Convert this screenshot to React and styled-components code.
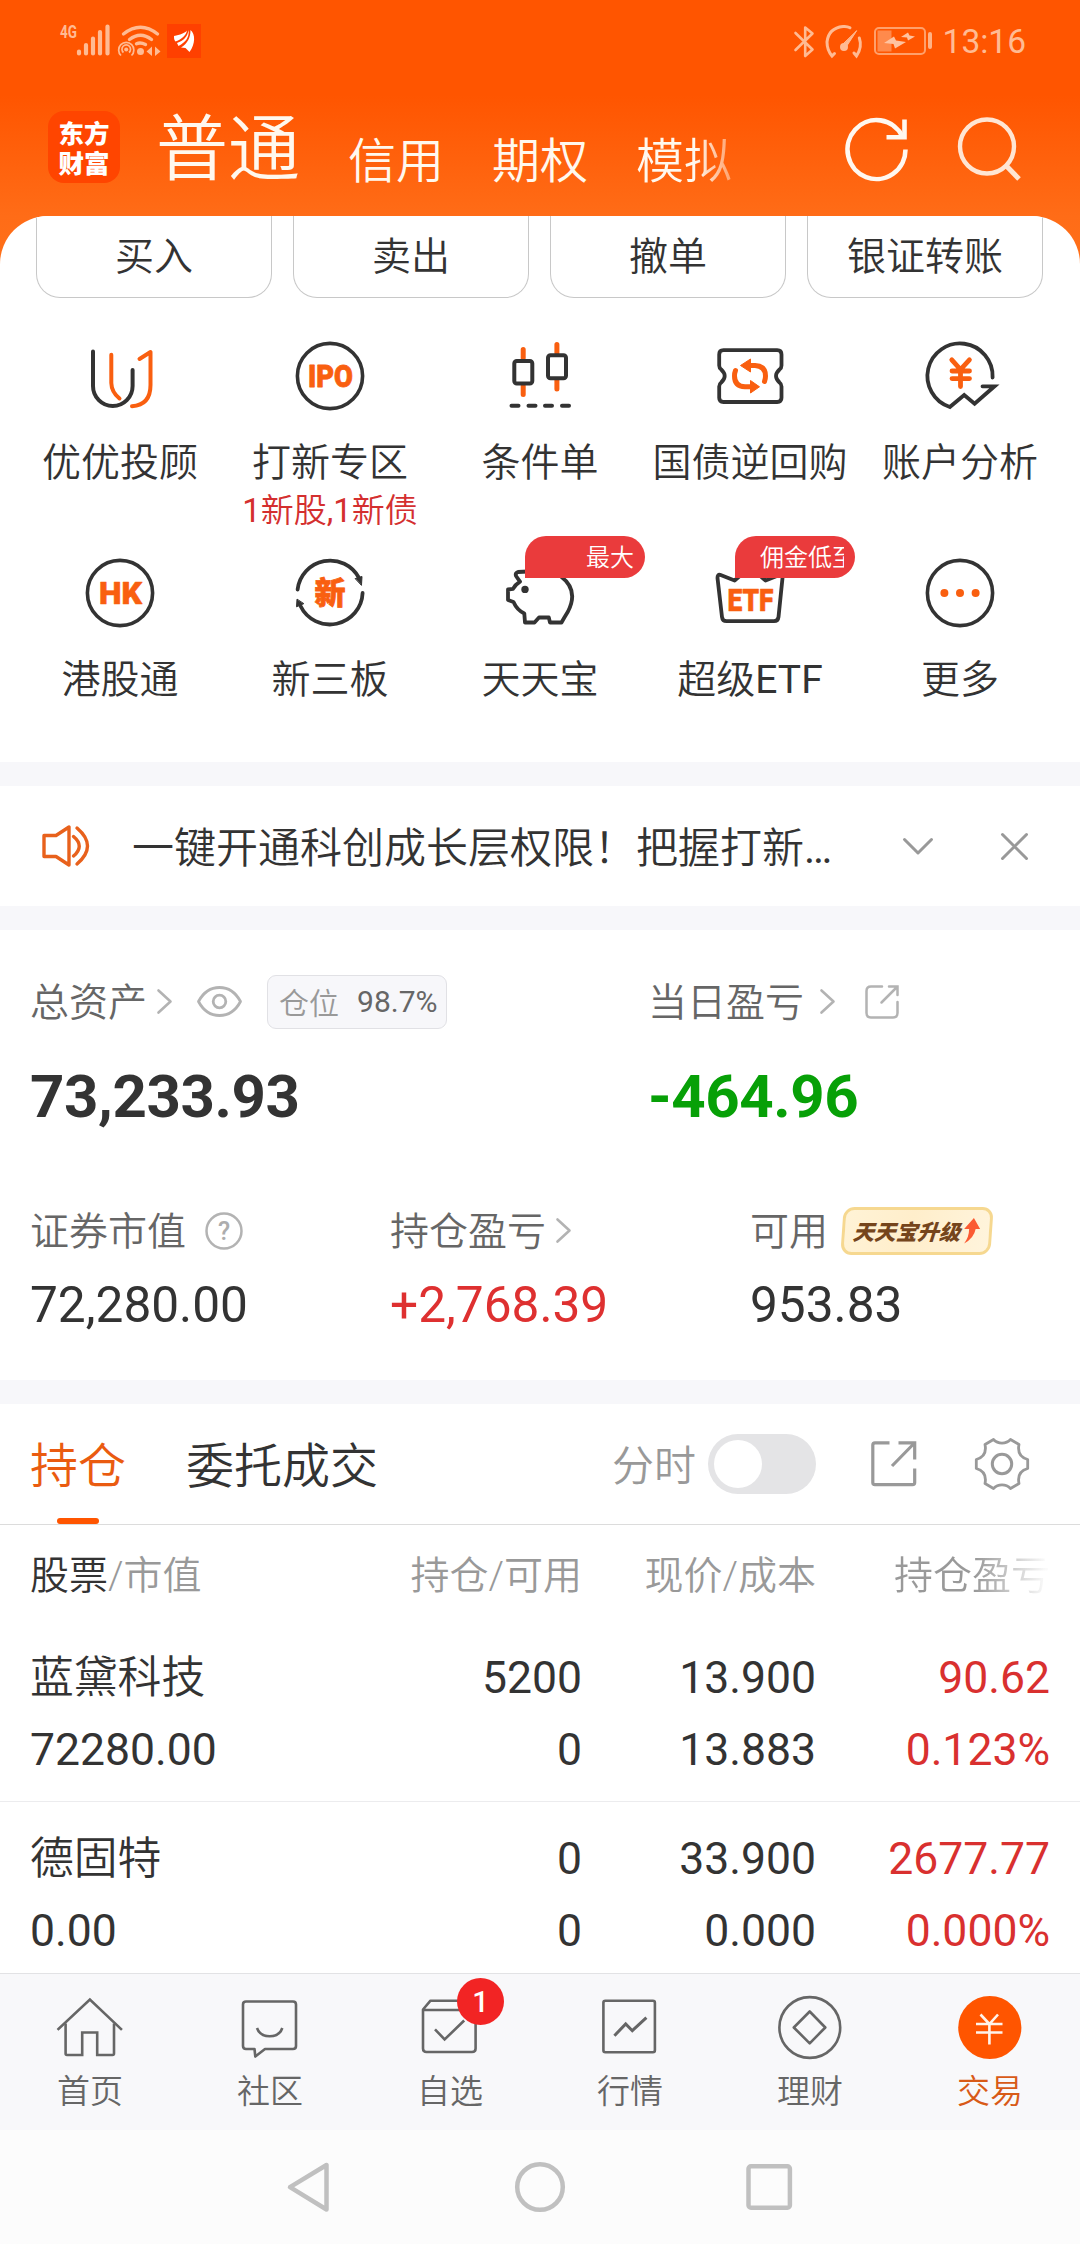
import React from 'react'
import styled, { createGlobalStyle } from 'styled-components'

const GlobalStyle = createGlobalStyle`
  * {
    box-sizing: border-box;
  }
  body {
    margin: 0;
    background: #fff;
    font-family: Roboto, "Noto Sans CJK SC", sans-serif;
    color: #333;
  }
  svg {
    display: block;
    overflow: visible;
    flex: none;
  }
`

/* ---------- icons ---------- */

function StatusLeft() {
  return (
    <svg width="144" height="36" viewBox="58 23 144 36" fill="none">
      <text x="60" y="38" fontSize="18" fontWeight="700" fill="#ffbb93" textLength="17" lengthAdjust="spacingAndGlyphs">4G</text>
      <g stroke="#ffbb93" strokeWidth="4.2" strokeLinecap="round">
        <path d="M79 51.500V53.500M86 45V53.500M93 38.500V53.500M100 32V53.500M107.500 26.500V53.500" />
      </g>
      <g stroke="#ffbb93" strokeWidth="3.400" strokeLinecap="round">
        <path d="M123.500 34Q140.500 20.500 157.500 34" />
        <path d="M129.500 39.500Q140.500 31 151.500 39.500" />
        <path d="M136.500 43.800Q140.500 42 145.500 44.500" />
      </g>
      <circle cx="140.500" cy="51.500" r="3.500" fill="#ffbb93" />
      <g stroke="#ffbb93" strokeWidth="1.700">
        <path d="M121 55.500A7.600 7.600 0 1 1 131.500 55.500" />
        <path d="M123.500 52.500A4.300 4.300 0 1 1 129 52.500" />
      </g>
      <circle cx="126.200" cy="49.500" r="2" fill="#ffbb93" />
      <path d="M146.500 51.500L152 46.500V56ZM160.500 51.500L155 46.500V56Z" fill="#ffbb93" />
      <rect x="167" y="24" width="34" height="34" fill="#ff4000" />
      <path d="M174 36C180 35 185 33 187 30.500C186 36 181 39.500 175.500 41.500C174 40 174 38 174 36Z" fill="#fff" />
      <path d="M188.500 30C189.500 37 186 42 178.500 46L177 43C183.500 40.500 187.500 37 188.500 30Z" fill="#fff" />
      <path d="M190.500 30C195.500 34 195.500 44 189.500 52L185.500 48L181 47.500C187.500 43.500 190.500 38 190.500 30Z" fill="#fff" />
    </svg>
  )
}

function BluetoothIcon() {
  return (
    <svg width="20" height="33" viewBox="0 0 20 33" fill="none" stroke="#ffbb93" strokeWidth="2.600" strokeLinejoin="round" strokeLinecap="round">
      <path d="M1.500 8L18.500 24.500L11.200 31V2.500L18.500 8.500L1.500 25" />
    </svg>
  )
}

function GaugeIcon() {
  return (
    <svg width="38" height="34" viewBox="0 0 38 34" fill="none" stroke="#ffbb93" strokeWidth="3" strokeLinecap="round">
      <path d="M9.500 29.500L7 32Q2 26 2 18Q3.500 4 18 2.500Q22 2 25 3.800" />
      <path d="M34.300 14Q37.500 23 31.500 32L29 29" />
      <path d="M31.500 7L20.800 23.500L17.500 21Z" fill="#ffbb93" strokeWidth="1" />
      <circle cx="19" cy="23" r="2.500" fill="#ffbb93" />
    </svg>
  )
}

function BatteryIcon() {
  return (
    <svg width="58" height="28" viewBox="0 0 58 28" fill="none">
      <rect x="1" y="1" width="50" height="26" rx="4" stroke="#ffa06b" strokeWidth="2" />
      <rect x="3.500" y="3.500" width="14" height="21" fill="#ff8a4c" />
      <rect x="54" y="5" width="4" height="17" rx="2" fill="#ffb286" />
      <path d="M10 16L20 9.500L22 13.500L32 15L21 21.500L19.500 17Z" fill="#ffc3a0" />
      <path d="M27 10L34 5.500L35.500 8.500L41 9.500L34 13.500L33 10.500Z" fill="#ffc3a0" />
    </svg>
  )
}

function RefreshIcon() {
  return (
    <svg width="62" height="64" viewBox="0 0 62 64" fill="none" stroke="#fff8f0" strokeWidth="4.600">
      <path d="M59.500 32.500A29 29.500 0 1 1 56.500 19.500" />
      <path d="M40.500 20.200H58.500V2.500" />
    </svg>
  )
}

function SearchIcon() {
  return (
    <svg width="64" height="64" viewBox="0 0 64 64" fill="none" stroke="#ffe5d3" strokeWidth="4.400">
      <circle cx="29" cy="29.500" r="27" />
      <path d="M47.500 48L61 62" strokeWidth="5" />
    </svg>
  )
}

const dark = '#333'
const orange = '#f95f10'

const icons = {
  advisor: (
    <g strokeWidth="4" strokeLinecap="round" strokeLinejoin="round">
      <path d="M9 11.500V46A19.800 20 0 0 0 48.600 46V30" stroke={dark} />
      <path d="M27.300 14.800V43Q27.500 52 35.500 58.500" stroke={orange} />
      <path d="M55.500 19L66.500 12V45Q66.500 65 48 66.200" stroke={orange} />
    </g>
  ),
  ipo: (
    <g>
      <circle cx="36" cy="36" r="32.600" stroke={dark} strokeWidth="3.600" />
      <text x="14" y="47" fontSize="32" fontWeight="900" fill={orange} stroke={orange} strokeWidth="0.800" strokeLinejoin="round" textLength="45" lengthAdjust="spacingAndGlyphs">IPO</text>
    </g>
  ),
  condition: (
    <g strokeWidth="4" strokeLinecap="round">
      <path d="M19.200 9.500V18M19.200 46V54.500M52.900 4.500V13M52.900 40V49" stroke={orange} strokeWidth="5" />
      <rect x="10.300" y="21" width="18" height="22.500" rx="2.500" stroke={dark} />
      <rect x="44" y="15.200" width="18" height="23" rx="2.500" stroke={dark} />
      <path d="M7.500 65.700H14.500M24.500 65.700H31.500M41 65.700H48M58 65.700H65" stroke={dark} />
    </g>
  ),
  bond: (
    <g>
      <path
        d="M9.500 10.200H63.200Q67.500 10.200 67.500 14.500V25.500Q67.500 28 65.500 29.500Q58.500 36 65.500 42.500Q67.500 44 67.500 46.500V57.800Q67.500 62 63.200 62H9.500Q5.200 62 5.200 57.800V46.500Q5.200 44 7.200 42.500Q14.200 36 7.200 29.500Q5.200 28 5.200 25.500V14.500Q5.200 10.200 9.500 10.200Z"
        stroke={dark}
        strokeWidth="3.800"
      />
      <path d="M34 25.500H41Q51.500 26 51.500 36Q51.500 39 50.500 41.500" stroke={orange} strokeWidth="5" strokeLinecap="round" />
      <path d="M26.500 25.500L36.500 19V32Z" fill={orange} stroke={orange} strokeLinejoin="round" />
      <path d="M38 46.800H31Q20.500 46.300 20.500 36Q20.500 33 21.500 30.500" stroke={orange} strokeWidth="5" strokeLinecap="round" />
      <path d="M45.500 46.800L36.500 40.500V53Z" fill={orange} stroke={orange} strokeLinejoin="round" />
    </g>
  ),
  account: (
    <g strokeLinecap="round">
      <path d="M68.600 37.500A32.600 32.600 0 1 0 25.800 67L40.200 55L50.600 63.700L70.500 46.300H58.500" stroke={dark} strokeWidth="3.800" />
      <path d="M27.800 19.800L36.500 29.500L45.400 19.800M36.500 30V46.500M28 31H45.500M28 38.600H45.500" stroke={orange} strokeWidth="4.800" />
    </g>
  ),
  hk: (
    <g>
      <circle cx="36" cy="36" r="32.600" stroke={dark} strokeWidth="3.600" />
      <text x="15" y="47.300" fontSize="32" fontWeight="900" fill={orange} stroke={orange} strokeWidth="0.600" strokeLinejoin="round" textLength="43" lengthAdjust="spacingAndGlyphs">HK</text>
    </g>
  ),
  neeq: (
    <g strokeLinecap="round">
      <path d="M3.600 32.500A32.700 32.700 0 0 1 65 21" stroke={dark} strokeWidth="3.800" />
      <path d="M61.500 21.500L68 19.500L67.500 28Z" fill={dark} stroke={dark} />
      <path d="M68.600 36A32.700 32.700 0 0 1 6.500 49" stroke={dark} strokeWidth="3.800" />
      <path d="M3 42.500L2.500 49.800L9.500 46.800Z" fill={dark} stroke={dark} />
      <text x="20.500" y="47" fontSize="31" fontWeight="900" fill={orange} stroke={orange} strokeWidth="0.800">新</text>
    </g>
  ),
  piggy: (
    <g>
      <path
        d="M24 14.500L14 15Q11 16 12 19L16 24.700Q11 28 9 31.800L4 32.500V43L9.500 45Q13 53 20.300 56.500L21 65.500H30.500L35 60.500H44.800L46 65.500H57.500Q60 61 64 54.500Q75 33 57 19.500"
        stroke={dark}
        strokeWidth="3.800"
        strokeLinejoin="round"
      />
      <circle cx="21" cy="32.400" r="3.700" fill={dark} />
    </g>
  ),
  etf: (
    <g>
      <path
        d="M6 17.800L20.600 23.500L36 10L51.600 23.500L66 17.800Q69 17.500 68.500 21L64.500 60Q64 64.200 60 64.200H12.500Q8.500 64.200 8 60L3.500 21Q3.500 17.500 6 17.800Z"
        stroke={dark}
        strokeWidth="3.800"
        strokeLinejoin="round"
      />
      <text x="13.500" y="53.500" fontSize="32" fontWeight="900" fill={orange} stroke={orange} strokeWidth="0.600" strokeLinejoin="round" textLength="46" lengthAdjust="spacingAndGlyphs">ETF</text>
    </g>
  ),
  more: (
    <g>
      <circle cx="36" cy="36" r="32.600" stroke={dark} strokeWidth="3.600" />
      <g fill={orange}>
        <circle cx="20.400" cy="36" r="4" />
        <circle cx="36" cy="36" r="4" />
        <circle cx="51.600" cy="36" r="4" />
      </g>
    </g>
  ),
}

const navIcons = {
  home: (
    <g>
      <path d="M0.500 33L31.900 3.500L63 33" strokeLinecap="square" />
      <path d="M7.600 27.500V57.500Q7.600 59 9 59H24.200V36.500H39.200V59H54.500Q56 59 56 57.500V27.500" />
    </g>
  ),
  chat: (
    <g strokeLinejoin="round">
      <path d="M8 5.500H55Q58 5.500 58 8.500V50Q58 53 55 53H27L17.300 60.500L16.500 53H8Q5 53 5 50V8.500Q5 5.500 8 5.500Z" />
      <path d="M19 32Q22 40.300 31.700 40.300Q41.500 40.300 44.300 32" />
    </g>
  ),
  watch: (
    <g>
      <path d="M5 14H57.600V52.500Q57.600 56 54 56H8.500Q5 56 5 52.500V13.500L12.500 4.700H50L57.600 14" strokeLinejoin="round" />
      <path d="M17 33.300L26.600 43.500L46.200 24.500" />
    </g>
  ),
  market: (
    <g>
      <rect x="5.400" y="4.700" width="51.500" height="51.500" rx="2" />
      <path d="M16.400 39.700L27.700 28L34.300 34.700L48.400 21.700" strokeWidth="3" />
    </g>
  ),
  wealth: (
    <g>
      <circle cx="31.800" cy="31.500" r="30.400" />
      <path d="M31.700 15.500L47.300 31.500L31.700 47.300L15.800 31.500Z" strokeLinejoin="round" />
    </g>
  ),
  trade: (
    <g>
      <circle cx="31.800" cy="31.500" r="31.600" fill="#ff5500" stroke="none" />
      <path d="M22.500 18.500L31.400 28L40 18.500M31.400 28V48.500M18 28H44.500M18 36.500H44.500" stroke="#fff3ea" strokeWidth="2.600" />
    </g>
  ),
}

function Chevron() {
  return (
    <svg width="15" height="27" viewBox="0 0 15 27" fill="none" stroke="#b3b3b3" strokeWidth="2.600" strokeLinecap="round" strokeLinejoin="round">
      <path d="M1.500 1.500L13.500 12.500L1.500 23.500" />
    </svg>
  )
}

function SpeakerIcon() {
  return (
    <svg width="48" height="42" viewBox="0 0 48 42" fill="none" stroke="#e8611c" strokeWidth="3.400" strokeLinejoin="round" strokeLinecap="round">
      <path d="M2 10.500H14L27 2V40L14 31.500H2Z" />
      <path d="M31.500 11.500Q43 21 31.500 31" />
      <path d="M35 3Q56 21 35 39" />
    </svg>
  )
}

function EyeIcon() {
  return (
    <svg width="45" height="33" viewBox="0 0 45 33" fill="none" stroke="#b3b3b3" strokeWidth="2.800">
      <path d="M1.500 15.500Q9 1.500 22.500 1.500Q36 1.500 43.500 15.500Q36 29.500 22.500 29.500Q9 29.500 1.500 15.500Z" strokeLinejoin="round" />
      <circle cx="22.500" cy="15.500" r="6.300" />
    </svg>
  )
}

function HelpIcon() {
  return (
    <svg width="38" height="38" viewBox="0 0 38 38" fill="none">
      <circle cx="19" cy="19" r="17.500" stroke="#b3b3b3" strokeWidth="2.500" />
      <text x="19" y="27.500" fontSize="25" fontWeight="500" textAnchor="middle" fill="#adadad">?</text>
    </svg>
  )
}

function SmallShareIcon() {
  return (
    <svg width="34" height="34" viewBox="0 0 34 34" fill="none" stroke="#b3b3b3" strokeWidth="2.500" strokeLinecap="round">
      <path d="M17 1.500H6Q1.500 1.500 1.500 6V28Q1.500 32.500 6 32.500H28Q32.500 32.500 32.500 28V17" />
      <path d="M24 1.500H32.500V10M32 2L16.500 17.500" />
    </svg>
  )
}

function ShareIcon() {
  return (
    <svg width="46" height="46" viewBox="0 0 46 46" fill="none" stroke="#999" strokeWidth="3.200">
      <path d="M18.500 1.800H4Q1.800 1.800 1.800 4V41.500Q1.800 43.700 4 43.700H41.500Q43.700 43.700 43.700 41.500V27.500" />
      <path d="M27.500 1.800H43.700V18.500M43 2.500L21 25" />
    </svg>
  )
}

function GearIcon() {
  return (
    <svg width="54" height="52" viewBox="0 0 54 52" fill="none" stroke="#999" strokeWidth="2.800" strokeLinejoin="round">
      <path d="M18.500 1.500C23 6.300 31 6.300 35.500 1.500L44 6.500C42.500 14 45.500 19.500 52.700 21.500V30.500C45.500 32.500 42.500 38 44 45.500L35.500 50.500C31 45.700 23 45.700 18.500 50.500L10 45.500C11.500 38 8.500 32.500 1.300 30.500V21.500C8.500 19.500 11.500 14 10 6.500Z" />
      <circle cx="27" cy="26" r="9.700" strokeWidth="3" />
    </svg>
  )
}

/* ---------- top ---------- */

const Page = styled.div`
  width: 1080px;
  height: 2244px;
  display: flex;
  flex-direction: column;
  overflow: hidden;
  background: linear-gradient(#ff5500 0, #ff5500 95px, #ff6c17 216px, #ff7019 264px, #fff 264px);
`

const StatusBar = styled.div`
  height: 82px;
  padding: 0 54px 0 58px;
  display: flex;
  align-items: center;
  justify-content: space-between;
`

const StatusRight = styled.div`
  display: flex;
  align-items: center;
  gap: 11px;
`

const Clock = styled.span`
  font-size: 33.5px;
  line-height: 41px;
  color: #ffbb93;
`

const Header = styled.header`
  height: 134px;
  padding: 0 58px 0 48px;
  display: flex;
  align-items: center;
`

const Logo = styled.div`
  width: 72px;
  height: 72px;
  margin: -4px 36px 0 0;
  border-radius: 16px;
  background: #ff4500;
  color: #fff;
  display: flex;
  flex-direction: column;
  align-items: center;
  justify-content: center;
  font: 900 25.5px/30px "Noto Sans CJK SC", sans-serif;
  flex: none;

  span {
    height: 30px;
  }
`

const AccountTabs = styled.nav`
  display: flex;
  align-items: baseline;
  gap: 48px;
  flex: 1;
  padding-top: 8px;
  color: #fff8ee;
  font-weight: 350;
`

const AccountTab = styled.span`
  font-size: ${(p) => (p.$active ? 72 : 48)}px;
  line-height: 84px;
  transform: translateY(${(p) => (p.$active ? 1 : 5)}px);
  ${(p) =>
    p.$fade &&
    `
    color: transparent;
    background: linear-gradient(90deg, #fff8ee 62%, rgba(255, 248, 238, 0.4) 100%);
    background-clip: text;
  `}
`

const HeaderActions = styled.div`
  display: flex;
  gap: 50px;
  margin-top: -1px;
`

/* ---------- sheet ---------- */

const Sheet = styled.main`
  flex: 1;
  min-height: 0;
  background: #fff;
  border-radius: 48px 48px 0 0;
  overflow: hidden;
`

const QuickActions = styled.div`
  display: grid;
  grid-template-columns: repeat(4, 236px);
  gap: 21px;
  padding: 0 36px;
`

const QuickButton = styled.button`
  height: 82px;
  padding: 0;
  background: #fff;
  border: 1px solid #c8c8c8;
  border-top: none;
  border-radius: 0 0 24px 24px;
  font: 350 39px/50px Roboto, "Noto Sans CJK SC", sans-serif;
  color: #333;
`

const Shortcuts = styled.div`
  display: grid;
  grid-template-columns: repeat(5, 210px);
  grid-auto-rows: 217px;
  height: 464px;
  padding: 42px 15px 0;
`

const Shortcut = styled.div`
  display: flex;
  flex-direction: column;
  align-items: center;
  position: relative;
  white-space: nowrap;

  b {
    font-weight: 400;
  }
`

const ShortcutLabel = styled.span`
  margin-top: 26px;
  font-size: 39px;
  font-weight: 350;
  line-height: 50px;
`

const ShortcutNote = styled.span`
  font-size: 33px;
  font-weight: 350;
  line-height: 45px;
  color: #d42f2f;
`

const Ribbon = styled.span`
  position: absolute;
  top: -21px;
  left: 90px;
  width: 120px;
  height: 42px;
  padding: 0 11px 0 ${(p) => p.$indent}px;
  border-radius: 21px 21px 21px 0;
  background: #ea3b3c;
  color: #fff;
  font-size: 24px;
  font-weight: 350;
  line-height: 44px;
`

const RibbonText = styled.span`
  display: block;
  overflow: hidden;
`

const Gap = styled.div`
  height: 24px;
  background: #f7f7fa;
`

const Notice = styled.div`
  height: 120px;
  padding: 0 52px 0 42px;
  display: flex;
  align-items: center;
`

const NoticeText = styled.span`
  flex: 1;
  margin-left: 42px;
  padding-bottom: 4px;
  font-size: 42px;
  font-weight: 350;
  white-space: nowrap;

  b {
    font-weight: 400;
  }
`

const NoticeActions = styled.div`
  display: flex;
  align-items: center;
  gap: 68px;
`

/* ---------- assets ---------- */

const Assets = styled.section`
  height: 450px;
  padding: 45px 30px 0;
`

const AssetRow = styled.div`
  display: grid;
  grid-template-columns: ${(p) => p.$columns};
  margin-bottom: ${(p) => p.$after || 0}px;
`

const AssetLabel = styled.div`
  display: flex;
  align-items: center;
  height: 54px;
  gap: ${(p) => p.$gap || 12}px;
  font-size: 39px;
  font-weight: 350;
  color: #666;
  white-space: nowrap;
`

const LabelText = styled.span`
  padding-bottom: 6px;
`

const Position = styled.div`
  display: flex;
  align-items: center;
  gap: 18px;
  width: 180px;
  height: 54px;
  padding: 0 0 2px 11px;
  border: 1px solid #e1e1e5;
  border-radius: 9px;
  background: #f7f7fa;
  font-size: 30px;
  color: #999;

  b {
    font-weight: 400;
    color: #666;
  }
`

const BigValue = styled.div`
  margin-top: 31px;
  font-size: 60px;
  font-weight: 700;
  letter-spacing: -0.4px;
  line-height: 73px;
  height: 72px;
  color: ${(p) => p.$color || '#333'};
`

const Value = styled.div`
  margin-top: 19px;
  font-size: 49.6px;
  line-height: 56px;
  color: ${(p) => p.$color || '#333'};
`

const UpgradeTag = styled.span`
  display: flex;
  align-items: center;
  gap: 1px;
  width: 150px;
  height: 48px;
  padding: 0 0 1px 8px;
  margin-left: 4px;
  border: 3px solid #f6d890;
  border-radius: 11px;
  background: linear-gradient(100deg, #fff3d6, #ffeecb 45%, #fff4dc);
  transform: skewX(-4deg);
  font-size: 21.5px;
  font-weight: 900;
  font-style: italic;
  color: #75451c;
`

/* ---------- holdings ---------- */

const TabBar = styled.div`
  display: flex;
  align-items: center;
  height: 121px;
  padding: 0 51px 0 30px;
  border-bottom: 1px solid #dcdcdc;
`

const Tab = styled.span`
  display: flex;
  align-items: center;
  height: 120px;
  margin-right: 60px;
  padding-bottom: 4px;
  position: relative;
  font-size: 48px;
  font-weight: 350;
  color: ${(p) => (p.$active ? '#ea5b10' : '#333')};

  &::after {
    content: '';
    display: ${(p) => (p.$active ? 'block' : 'none')};
    position: absolute;
    left: 27px;
    bottom: 0;
    width: 42px;
    height: 6px;
    border-radius: 3px;
    background: #ff5500;
  }
`

const TabTools = styled.div`
  display: flex;
  align-items: center;
  margin-left: auto;
  color: #999;
  font-size: 42px;
  font-weight: 350;
`

const ToolLabel = styled.span`
  padding-bottom: 3px;
`

const Switch = styled.div`
  width: 108px;
  height: 60px;
  margin: 0 55px 0 12px;
  padding: 6px;
  border-radius: 30px;
  background: #e4e4e6;

  &::before {
    content: '';
    display: block;
    width: 48px;
    height: 48px;
    border-radius: 50%;
    background: #fff;
  }
`

const ToolGap = styled.div`
  width: 58px;
`

const TableRow = styled.div`
  display: grid;
  grid-template-columns: 300px 252px 234px 234px;
  padding: 0 30px;
`

const HeadRow = styled(TableRow)`
  height: 96px;
  padding-bottom: 3px;
  align-items: center;
  font-size: 39px;
  font-weight: 350;
  color: #999;

  em {
    font-style: normal;
    color: #333;
  }
`

const HeadCell = styled.span`
  text-align: ${(p) => (p.$left ? 'left' : 'right')};
  ${(p) =>
    p.$fade &&
    `
    color: transparent;
    background: linear-gradient(90deg, #999 68%, rgba(153, 153, 153, 0.05) 98%);
    background-clip: text;
  `}
`

const StockRow = styled(TableRow)`
  height: 181px;
  padding-top: 21px;
  border-bottom: 1px solid #ececee;
  font-size: 44.5px;
  line-height: 72px;
`

const Cell = styled.div`
  text-align: ${(p) => (p.$left ? 'left' : 'right')};
  color: ${(p) => (p.$up ? '#d9302f' : '#333')};
`

const StockName = styled.div`
  height: 72px;
  font-size: 43.8px;
  font-weight: 350;
`

/* ---------- bottom ---------- */

const BottomNav = styled.nav`
  display: grid;
  grid-template-columns: repeat(6, 180px);
  height: 157px;
  flex: none;
  padding-top: 22px;
  border-top: 1px solid #e2e2e4;
  background: #f8f8fa;
`

const NavItem = styled.div`
  display: flex;
  flex-direction: column;
  align-items: center;
  gap: 9px;
  position: relative;
  font-size: 33px;
  font-weight: 350;
  line-height: 46px;
  color: ${(p) => (p.$active ? '#d85a17' : '#666')};
`

const NavBadge = styled.span`
  position: absolute;
  top: -18px;
  left: 97px;
  width: 47px;
  height: 47px;
  border-radius: 50%;
  background: #f22424;
  color: #fff;
  font-size: 29px;
  font-weight: 500;
  line-height: 48px;
  text-align: center;
`

const SystemBar = styled.div`
  display: flex;
  align-items: center;
  justify-content: center;
  gap: 182px;
  height: 114px;
  flex: none;
  background: #fcfcfc;
`

const shortcuts = [
  { icon: 'advisor', label: '优优投顾' },
  { icon: 'ipo', label: '打新专区', note: <><b>1</b>新股<b>,1</b>新债</> },
  { icon: 'condition', label: '条件单' },
  { icon: 'bond', label: '国债逆回购' },
  { icon: 'account', label: '账户分析' },
  { icon: 'hk', label: '港股通' },
  { icon: 'neeq', label: '新三板' },
  { icon: 'piggy', label: '天天宝', ribbon: '最大', indent: 61 },
  { icon: 'etf', label: <>超级<b>ETF</b></>, ribbon: '佣金低至', indent: 25 },
  { icon: 'more', label: '更多' },
]

const stocks = [
  { name: '蓝黛科技', value: '72280.00', held: '5200', usable: '0', price: '13.900', cost: '13.883', profit: '90.62', rate: '0.123%' },
  { name: '德固特', value: '0.00', held: '0', usable: '0', price: '33.900', cost: '0.000', profit: '2677.77', rate: '0.000%' },
]

const navItems = [
  { icon: 'home', label: '首页' },
  { icon: 'chat', label: '社区' },
  { icon: 'watch', label: '自选', badge: 1 },
  { icon: 'market', label: '行情' },
  { icon: 'wealth', label: '理财' },
  { icon: 'trade', label: '交易', active: true },
]

function App() {
  return (
    <Page>
      <GlobalStyle />
      <StatusBar>
        <StatusLeft />
        <StatusRight>
          <BluetoothIcon />
          <GaugeIcon />
          <BatteryIcon />
          <Clock>13:16</Clock>
        </StatusRight>
      </StatusBar>

      <Header>
        <Logo>
          <span>东方</span>
          <span>财富</span>
        </Logo>
        <AccountTabs>
          <AccountTab $active>普通</AccountTab>
          <AccountTab>信用</AccountTab>
          <AccountTab>期权</AccountTab>
          <AccountTab $fade>模拟</AccountTab>
        </AccountTabs>
        <HeaderActions>
          <RefreshIcon />
          <SearchIcon />
        </HeaderActions>
      </Header>

      <Sheet>
        <QuickActions>
          <QuickButton>买入</QuickButton>
          <QuickButton>卖出</QuickButton>
          <QuickButton>撤单</QuickButton>
          <QuickButton>银证转账</QuickButton>
        </QuickActions>

        <Shortcuts>
          {shortcuts.map((s) => (
            <Shortcut key={s.icon}>
              <svg width="72" height="72" viewBox="0 0 72 72" fill="none">{icons[s.icon]}</svg>
              {s.ribbon && (
                <Ribbon $indent={s.indent}>
                  <RibbonText>{s.ribbon}</RibbonText>
                </Ribbon>
              )}
              <ShortcutLabel>{s.label}</ShortcutLabel>
              {s.note && <ShortcutNote>{s.note}</ShortcutNote>}
            </Shortcut>
          ))}
        </Shortcuts>

        <Gap />
        <Notice>
          <SpeakerIcon />
          <NoticeText>一键开通科创成长层权限！把握打新<b>…</b></NoticeText>
          <NoticeActions>
            <svg width="30" height="17" viewBox="0 0 30 17" fill="none" stroke="#999" strokeWidth="3" strokeLinecap="round" strokeLinejoin="round">
              <path d="M1.500 1.500L15 15L28.500 1.500" />
            </svg>
            <svg width="27" height="27" viewBox="0 0 27 27" fill="none" stroke="#999" strokeWidth="3" strokeLinecap="round">
              <path d="M1.500 1.500L25.500 25.500M25.500 1.500L1.500 25.500" />
            </svg>
          </NoticeActions>
        </Notice>
        <Gap />

        <Assets>
          <AssetRow $columns="618px 1fr" $after={72}>
            <div>
              <AssetLabel $gap={25}>
                <AssetLabel $gap={10}><LabelText>总资产</LabelText><Chevron /></AssetLabel>
                <EyeIcon />
                <Position>仓位 <b>98.7%</b></Position>
              </AssetLabel>
              <BigValue>73,233.93</BigValue>
            </div>
            <div>
              <AssetLabel $gap={30}>
                <AssetLabel $gap={16}><LabelText>当日盈亏</LabelText><Chevron /></AssetLabel>
                <SmallShareIcon />
              </AssetLabel>
              <BigValue $color="#07a007">-464.96</BigValue>
            </div>
          </AssetRow>
          <AssetRow $columns="360px 360px 1fr">
            <div>
              <AssetLabel $gap={19}><LabelText>证券市值</LabelText><HelpIcon /></AssetLabel>
              <Value>72,280.00</Value>
            </div>
            <div>
              <AssetLabel $gap={10}><LabelText>持仓盈亏</LabelText><Chevron /></AssetLabel>
              <Value $color="#de3030">+2,768.39</Value>
            </div>
            <div>
              <AssetLabel $gap={10}>
                <LabelText>可用</LabelText>
                <UpgradeTag>
                  天天宝升级
                  <svg width="18" height="26" viewBox="0 0 18 26">
                    <path d="M11 0L18 11H13.500Q12.500 20 3 25.500Q7.500 19 7 11H2Z" fill="#fb5b33" />
                  </svg>
                </UpgradeTag>
              </AssetLabel>
              <Value>953.83</Value>
            </div>
          </AssetRow>
        </Assets>
        <Gap />

        <TabBar>
          <Tab $active>持仓</Tab>
          <Tab>委托成交</Tab>
          <TabTools>
            <ToolLabel>分时</ToolLabel>
            <Switch />
            <ShareIcon />
            <ToolGap />
            <GearIcon />
          </TabTools>
        </TabBar>
        <HeadRow>
          <HeadCell $left><em>股票</em>/市值</HeadCell>
          <HeadCell>持仓/可用</HeadCell>
          <HeadCell>现价/成本</HeadCell>
          <HeadCell $fade>持仓盈亏</HeadCell>
        </HeadRow>
        {stocks.map((s) => (
          <StockRow key={s.name}>
            <Cell $left>
              <StockName>{s.name}</StockName>
              <div>{s.value}</div>
            </Cell>
            <Cell>
              <div>{s.held}</div>
              <div>{s.usable}</div>
            </Cell>
            <Cell>
              <div>{s.price}</div>
              <div>{s.cost}</div>
            </Cell>
            <Cell $up>
              <div>{s.profit}</div>
              <div>{s.rate}</div>
            </Cell>
          </StockRow>
        ))}
      </Sheet>

      <BottomNav>
        {navItems.map((n) => (
          <NavItem key={n.label} $active={n.active}>
            <svg width="64" height="64" viewBox="0 0 64 64" fill="none" stroke="#666" strokeWidth="2.600">{navIcons[n.icon]}</svg>
            {n.badge && <NavBadge>{n.badge}</NavBadge>}
            {n.label}
          </NavItem>
        ))}
      </BottomNav>

      <SystemBar>
        <svg width="46" height="50" viewBox="0 0 46 50" fill="none" stroke="#c0c0c0" strokeWidth="4.500" strokeLinejoin="round">
          <path d="M39.500 3V47.500L3 25.200Z" />
        </svg>
        <svg width="50" height="50" viewBox="0 0 50 50" fill="none" stroke="#c0c0c0" strokeWidth="4.500">
          <circle cx="25" cy="25" r="22.800" />
        </svg>
        <svg width="46" height="46" viewBox="0 0 46 46" fill="none" stroke="#c0c0c0" strokeWidth="4.500">
          <rect x="1.500" y="2.300" width="41.400" height="41.400" rx="2.500" />
        </svg>
      </SystemBar>
    </Page>
  )
}

export default App
